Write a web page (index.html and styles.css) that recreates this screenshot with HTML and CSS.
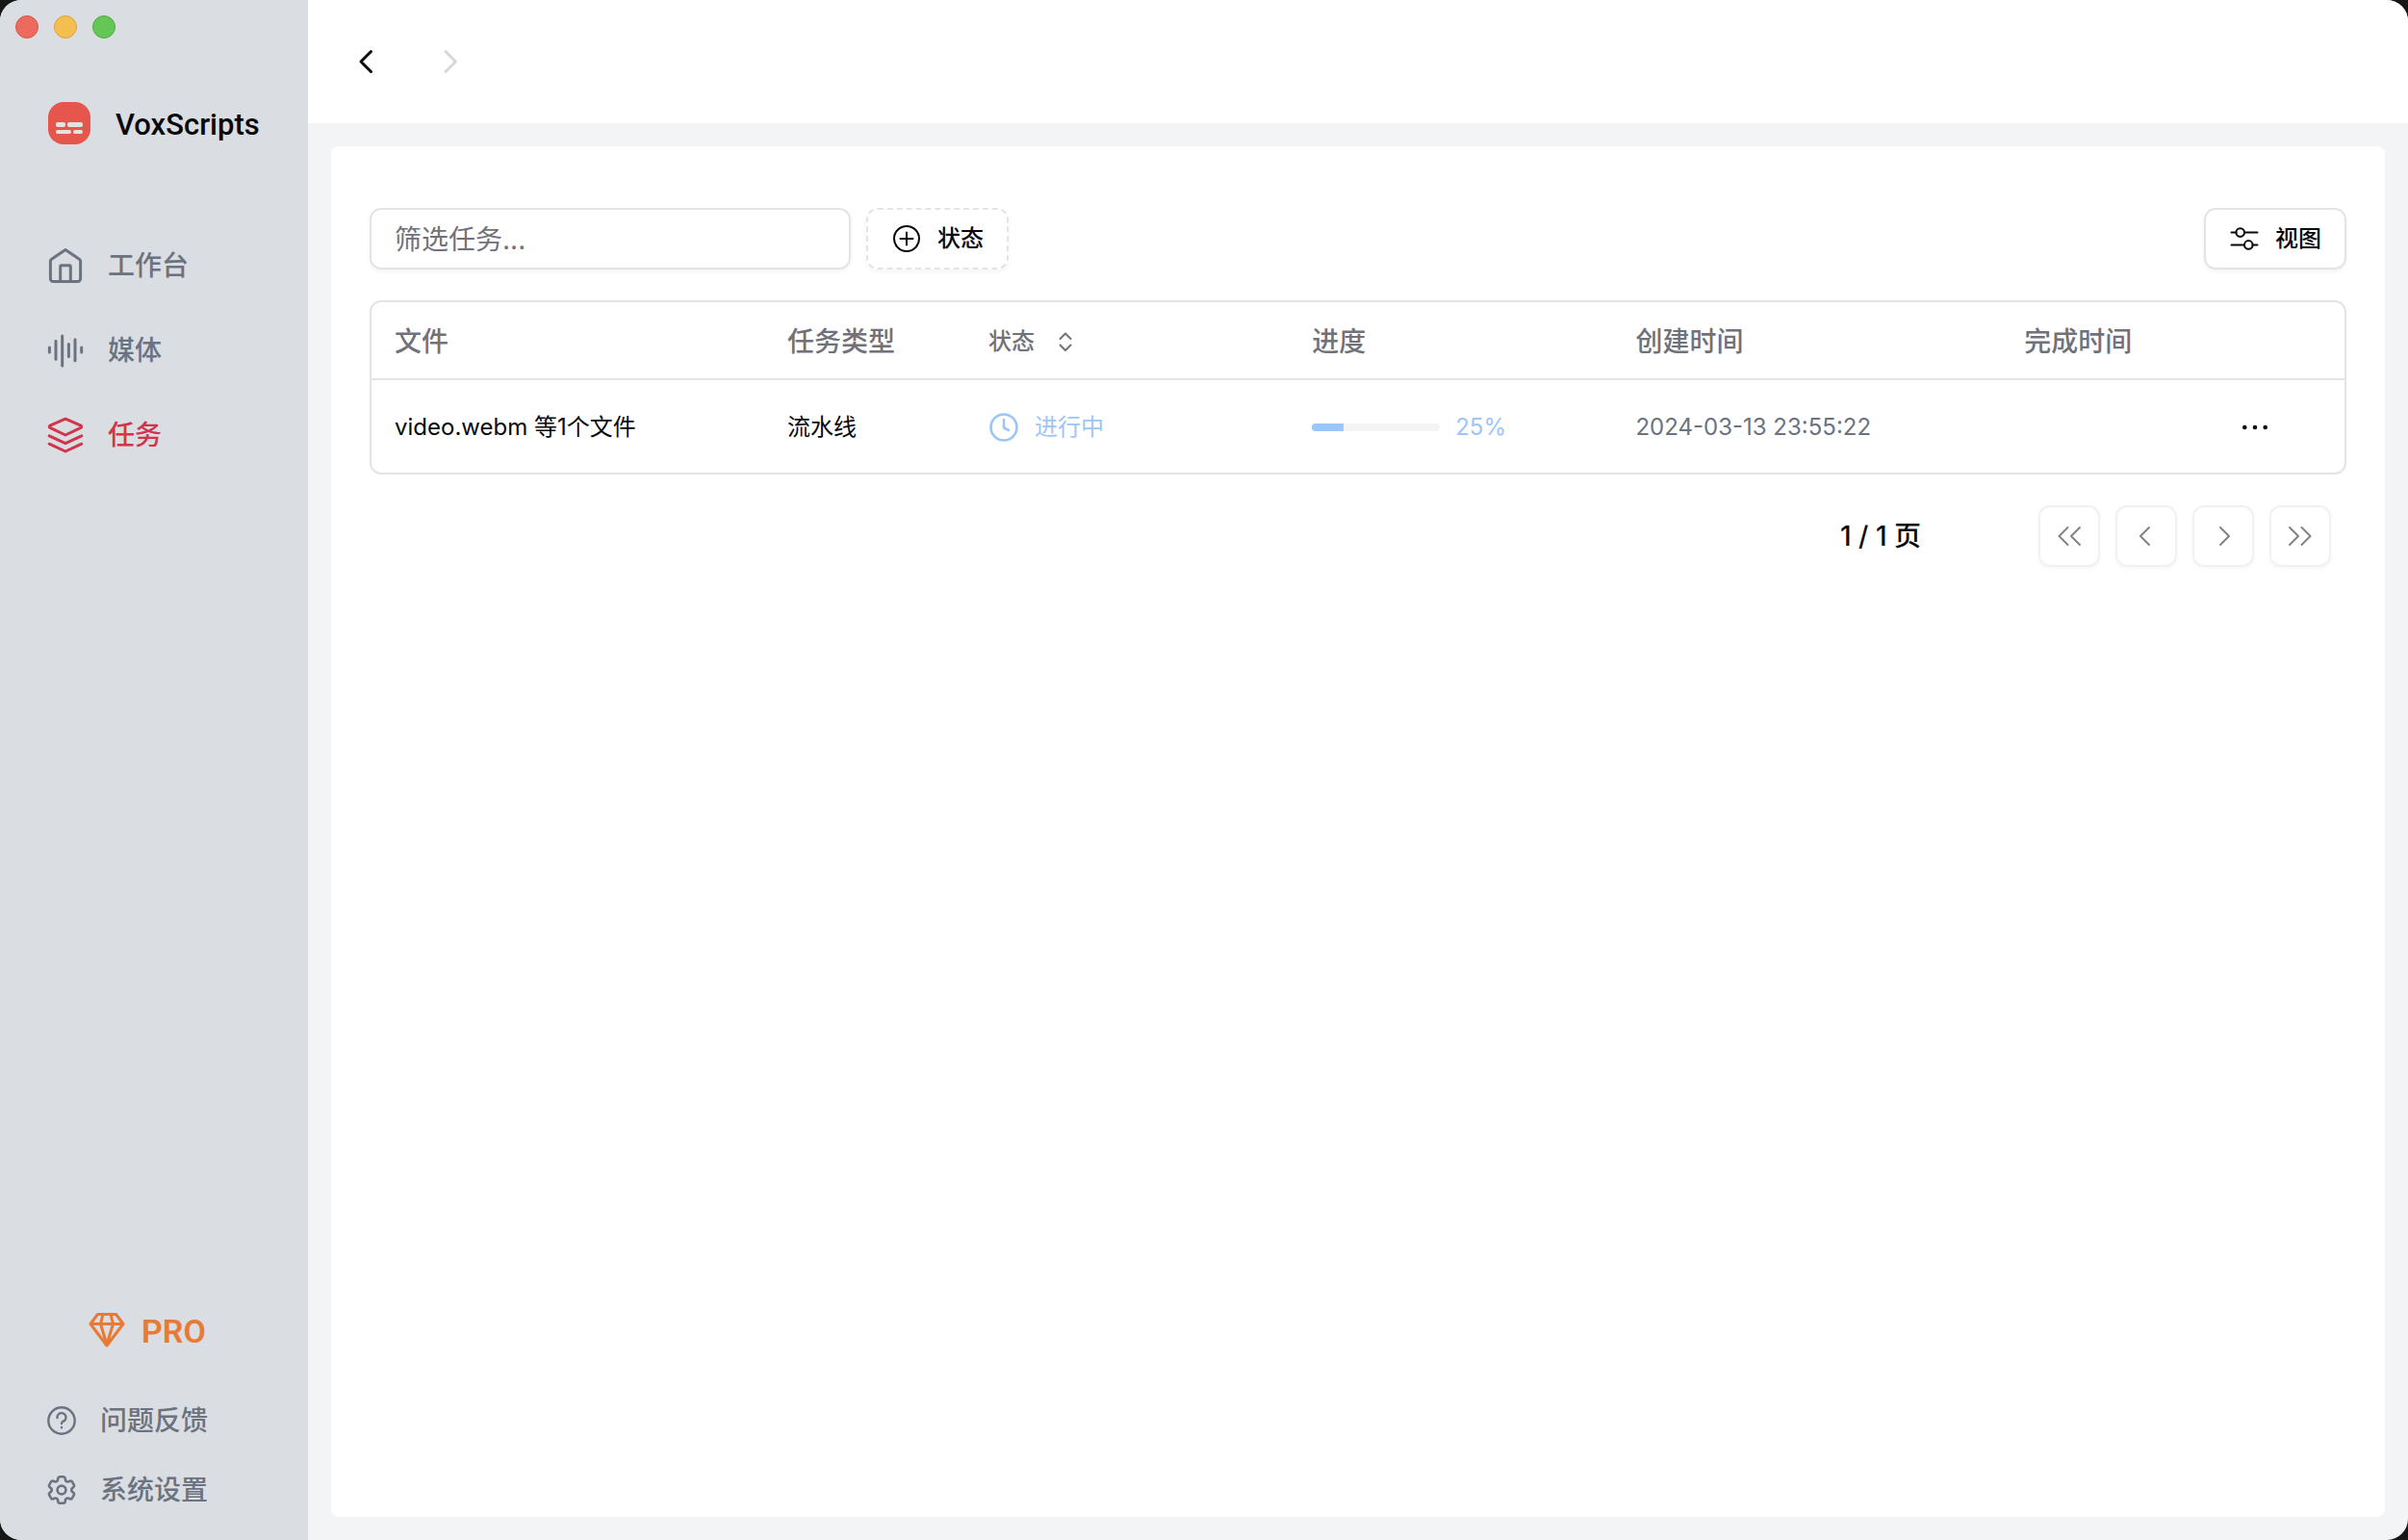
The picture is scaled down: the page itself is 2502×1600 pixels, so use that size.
FILE: index.html
```html
<!DOCTYPE html>
<html lang="zh-CN">
<head>
<meta charset="utf-8">
<meta name="viewport" content="width=device-width, initial-scale=1">
<title>VoxScripts</title>
<link rel="stylesheet" href="styles.css">
</head>
<body>
<div class="app">
  <aside class="sidebar">
    <div class="lights"><span class="light close"></span><span class="light minimize"></span><span class="light maximize"></span></div>
    <div class="brand">
      <svg class="logo" viewBox="0 0 44 44"><rect width="44" height="44" rx="16" fill="#e5564d"/><g fill="#e4e2e4"><rect x="8" y="21" width="10" height="5" rx="2"/><rect x="20" y="21" width="16" height="5" rx="2"/><rect x="8" y="29" width="16" height="4" rx="2"/><rect x="26" y="29" width="10" height="4" rx="2"/></g></svg>
      <span class="wordmark">VoxScripts</span>
    </div>
    <nav class="nav">
      <a href="#"><svg class="line" viewBox="0 0 40 40"><path d="M20 3.6 5.6 13.2Q4.4 14 4.4 15.4V33.6a3 3 0 0 0 3 3H32.6a3 3 0 0 0 3-3V15.4Q35.6 14 34.4 13.2ZM14.7 36V20.8a1 1 0 0 1 1-1H24.3a1 1 0 0 1 1 1V36"/></svg>工作台</a>
      <a href="#"><svg class="line" viewBox="0 0 40 40"><path d="M3.4 17v5M10 10.3v19M16.7 5v31M23.4 13.6v12.8M30 8.7v22M36.7 17v5"/></svg>媒体</a>
      <a href="#" class="active" aria-current="page"><svg class="line" viewBox="0 0 40 40"><path d="M20 3.2 36 10.2a1.2 1.2 0 0 1 0 2.2L20 20 4 12.4a1.2 1.2 0 0 1 0-2.2ZM3.2 20.8 20 28.6 36.8 20.8M3.2 29.2 20 37 36.8 29.2"/></svg>任务</a>
    </nav>
    <a href="#" class="pro"><svg class="line" viewBox="0 0 40 40"><path d="M10.500 4.500H29.500L37 14.500 20 37 3 14.500ZM3 14.500H37M16 4.500 13.500 14.500 20 36 26.500 14.500 24 4.500"/></svg><span class="wordmark">PRO</span></a>
    <nav class="support">
      <a href="#"><svg class="help" viewBox="0 0 32 32"><circle cx="16" cy="16" r="13.700"/><path d="M11.500 13a4.500 4.500 0 1 1 6.300 3.700Q16 17.500 16 19M16 23v.2"/></svg>问题反馈</a>
      <a href="#"><svg class="gear" viewBox="1.500 1.500 21 21"><path d="M9.594 3.940c.09-.542.56-.94 1.110-.94h2.593c.55 0 1.020.398 1.110.94l.213 1.281c.063.374.313.686.645.87.074.04.147.083.22.127.325.196.72.257 1.075.124l1.217-.456a1.125 1.125 0 0 1 1.370.49l1.296 2.247a1.125 1.125 0 0 1-.26 1.431l-1.003.827c-.293.241-.438.613-.43.992a7.723 7.723 0 0 1 0 .255c-.008.378.137.75.43.991l1.004.827c.424.35.534.955.26 1.430l-1.298 2.247a1.125 1.125 0 0 1-1.369.491l-1.217-.456c-.355-.133-.75-.072-1.076.124a6.470 6.470 0 0 1-.22.128c-.331.183-.581.495-.644.869l-.213 1.281c-.09.543-.56.94-1.110.94h-2.594c-.55 0-1.019-.398-1.110-.94l-.213-1.281c-.062-.374-.312-.686-.644-.87a6.520 6.520 0 0 1-.22-.127c-.325-.196-.72-.257-1.076-.124l-1.217.456a1.125 1.125 0 0 1-1.369-.49l-1.297-2.247a1.125 1.125 0 0 1 .26-1.431l1.004-.827c.292-.24.437-.613.43-.991a6.932 6.932 0 0 1 0-.255c.007-.38-.138-.751-.43-.992l-1.004-.827a1.125 1.125 0 0 1-.26-1.430l1.297-2.247a1.125 1.125 0 0 1 1.370-.491l1.216.456c.356.133.751.072 1.076-.124.072-.044.146-.086.22-.128.332-.183.582-.495.644-.869l.214-1.280Z"/><circle cx="12" cy="12" r="2.900"/></svg>系统设置</a>
    </nav>
  </aside>
  <div class="main">
    <header class="topbar">
      <button aria-label="后退"><svg class="line" viewBox="0 0 40 40"><path d="M25.500 9.500 15 20 25.500 30.500"/></svg></button>
      <button aria-label="前进" disabled><svg class="line" viewBox="0 0 40 40"><path d="M15 9.500 25.500 20 15 30.500"/></svg></button>
    </header>
    <main class="card">
      <div class="toolbar">
        <input class="filter" type="text" placeholder="筛选任务..." aria-label="筛选任务">
        <button class="btn dashed"><svg class="thin" viewBox="0 0 32 32"><circle cx="16" cy="16" r="13"/><path d="M16 9.500v13M9.500 16h13"/></svg>状态</button>
        <button class="btn view"><svg class="thin" viewBox="0 0 32 32"><circle cx="11.700" cy="9.600" r="4.300"/><circle cx="20.300" cy="22.400" r="4.300"/><path d="M2.500 9.600h5M16 9.600h13.500M2.500 22.400H16M24.500 22.400h5"/></svg>视图</button>
      </div>
      <div class="table-wrap">
        <table>
          <colgroup><col class="c-file"><col class="c-type"><col class="c-status"><col class="c-progress"><col class="c-created"><col></colgroup>
          <thead><tr><th>文件</th><th>任务类型</th><th><button class="sort">状态<svg class="thin" viewBox="0 0 32 32"><path d="M10.500 13 16 7.500 21.500 13M10.500 19.500 16 25 21.500 19.500"/></svg></button></th><th>进度</th><th>创建时间</th><th>完成时间</th></tr></thead>
          <tbody><tr>
            <td>video.webm 等1个文件</td>
            <td>流水线</td>
            <td><div class="running"><svg viewBox="0 0 32 32" class="clock"><circle cx="16" cy="16" r="13.500"/><path d="M16 8v8.500l5 2.500"/></svg>进行中</div></td>
            <td><div class="progress"><div class="track" role="progressbar" aria-label="进度" aria-valuenow="25" aria-valuemin="0" aria-valuemax="100"><div class="bar" style="width:25%"></div></div>25%</div></td>
            <td class="date">2024-03-13 23:55:22</td>
            <td><button class="more" aria-label="更多"><svg viewBox="0 0 32 32"><circle cx="5.300" cy="16" r="2.300"/><circle cx="16" cy="16" r="2.300"/><circle cx="26.700" cy="16" r="2.300"/></svg></button></td>
          </tr></tbody>
        </table>
      </div>
      <div class="pager">
        <span class="page">1 / 1 页</span>
        <button class="btn step" disabled aria-label="首页"><svg class="thin" viewBox="0 0 32 32"><path d="M14.500 7 5.500 16 14.500 25M27 7 18 16 27 25"/></svg></button>
        <button class="btn step" disabled aria-label="上一页"><svg class="thin" viewBox="0 0 32 32"><path d="M19 7 10 16 19 25"/></svg></button>
        <button class="btn step" disabled aria-label="下一页"><svg class="thin" viewBox="0 0 32 32"><path d="M13 7 22 16 13 25"/></svg></button>
        <button class="btn step" disabled aria-label="末页"><svg class="thin" viewBox="0 0 32 32"><path d="M5 7 14 16 5 25M17.500 7 26.500 16 17.500 25"/></svg></button>
      </div>
    </main>
  </div>
</div>
</body>
</html>
```
FILE: styles.css
```css
* { box-sizing: border-box; }
body {
  margin: 0;
  background: #171717;
  color: #09090b;
  font: 24px/32px Inter, "Noto Sans CJK SC", sans-serif;
}
svg { display: block; flex: none; fill: none; stroke: currentColor; stroke-linecap: round; stroke-linejoin: round; }
.line { stroke-width: 3; }
.thin { width: 32px; height: 32px; stroke-width: 2; }
button, input { margin: 0; padding: 0; border: 0; background: none; color: inherit; font: inherit; }
a { color: inherit; text-decoration: none; }

.app { display: flex; min-height: 100vh; border-radius: 22px; overflow: hidden; background: #f3f4f6; }

.sidebar { display: flex; flex-direction: column; flex: none; width: 320px; padding: 16px 16px 16px 48px; background: #dadde2; color: #6b7280; }
.lights { display: flex; gap: 16px; margin-left: -32px; }
.light { width: 24px; height: 24px; border-radius: 50%; border: 1px solid; }
.close { background: #ec6a5e; border-color: #d85549; }
.minimize { background: #f4bf4f; border-color: #d9a33c; }
.maximize { background: #64c655; border-color: #52ab43; }
.brand { display: flex; align-items: center; gap: 26px; height: 44px; margin: 66px 0 82px 2px; color: #09090b; font: 500 31px/40px Roboto, sans-serif; }
.wordmark { padding-top: 4px; }
.logo { width: 44px; height: 44px; stroke: none; }
.nav { display: flex; flex-direction: column; }
.nav a { display: flex; align-items: center; gap: 24px; height: 88px; font-size: 28px; font-weight: 500; }
.nav svg, .pro svg { width: 40px; height: 40px; }
.nav .active { color: #d1344b; }
.pro { display: flex; align-items: center; gap: 16px; height: 48px; margin: auto 0 35px 43px; color: #e87a35; font: 600 34px/40px Roboto, sans-serif; }
.support a { display: flex; align-items: center; gap: 24px; height: 72px; font-size: 28px; font-weight: 500; }
.support svg { width: 32px; height: 32px; }
.help { stroke-width: 2.4; }
.gear { stroke-width: 1.7; }

.main { display: flex; flex-direction: column; flex: 1; min-width: 0; }
.topbar { display: flex; align-items: center; gap: 48px; height: 128px; padding: 0 40px; background: #fff; }
.topbar svg { width: 40px; height: 40px; stroke-width: 3; }
.topbar button:disabled { color: #d6d7de; }

.card { flex: 1; margin: 24px; padding: 64px 40px; border-radius: 8px; background: #fff; }
.toolbar { display: flex; gap: 16px; }
.filter { width: 500px; height: 64px; padding: 2px 24px 0; border: 2px solid #e4e4e7; border-radius: 12px; font-size: 28px; box-shadow: 0 2px 4px #0000000d; }
.filter::placeholder { color: #71717a; opacity: 1; }
.btn { display: flex; align-items: center; justify-content: center; gap: 16px; height: 64px; padding: 0 24px; border: 2px solid #e4e4e7; border-radius: 12px; font-weight: 500; box-shadow: 0 2px 4px #0000000d; }
.dashed { border-style: dashed; }
.view { margin-left: auto; }

.table-wrap { margin-top: 32px; border: 2px solid #e4e4e7; border-radius: 12px; }
table { width: 100%; table-layout: fixed; border-collapse: collapse; }
th, td { padding: 2px 24px 0; text-align: left; }
th { height: 80px; border-bottom: 2px solid #e4e4e7; color: #71717a; font-size: 28px; font-weight: 500; }
td { height: 97px; padding-top: 1px; }
.c-file { width: 19.9%; }
.c-type { width: 10.2%; }
.c-status { width: 16.4%; }
.c-progress { width: 16.4%; }
.c-created { width: 19.7%; }
.sort { display: flex; align-items: center; gap: 16px; font-size: 24px; }
.running, .progress { display: flex; align-items: center; gap: 16px; color: #9cc5f8; }
.clock { width: 32px; height: 32px; stroke-width: 2.6; }
.track { width: 133px; height: 8px; border-radius: 4px; overflow: hidden; background: #f4f4f5; }
.bar { height: 8px; background: #9cc5f8; }
.date { color: #6b7280; }
.more { display: block; margin-left: 224px; }
.more svg { width: 32px; height: 32px; fill: currentColor; stroke: none; }

.pager { display: flex; align-items: center; justify-content: flex-end; gap: 16px; margin: 32px 16px 0 0; }
.page { margin-right: 106px; font-size: 28px; font-weight: 500; }
.step { width: 64px; padding: 0; }
.step:disabled { opacity: .5; }
```
